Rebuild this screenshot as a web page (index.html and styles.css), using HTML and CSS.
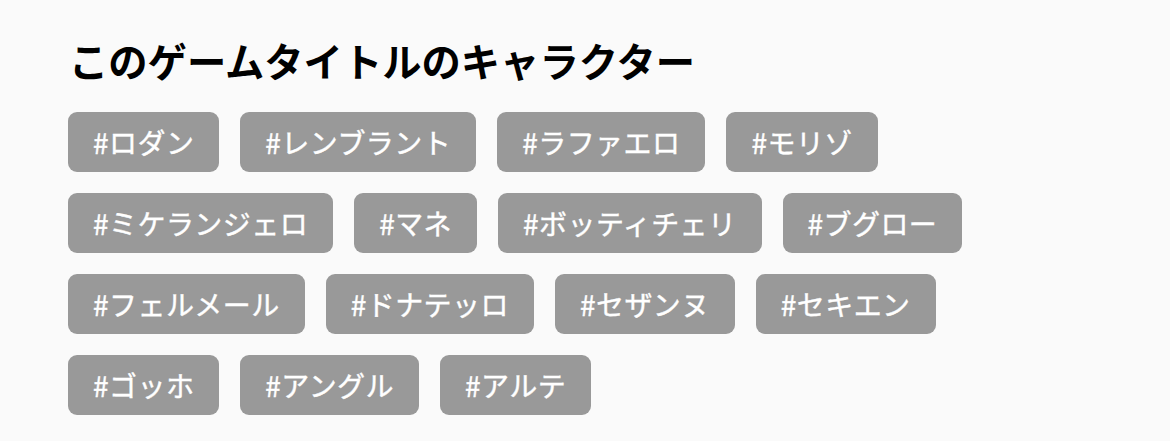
FILE: index.html
```html
<!DOCTYPE html>
<html lang="ja">
<head>
<meta charset="utf-8">
<link rel="stylesheet" href="styles.css">
</head>
<body>
<section class="chars">
  <h2 class="title">このゲームタイトルのキャラクター</h2>
  <ul class="tags">
    <li class="tag">#ロダン</li>
    <li class="tag">#レンブラント</li>
    <li class="tag">#ラファエロ</li>
    <li class="tag">#モリゾ</li>
    <li class="tag">#ミケランジェロ</li>
    <li class="tag">#マネ</li>
    <li class="tag">#ボッティチェリ</li>
    <li class="tag">#ブグロー</li>
    <li class="tag">#フェルメール</li>
    <li class="tag">#ドナテッロ</li>
    <li class="tag">#セザンヌ</li>
    <li class="tag">#セキエン</li>
    <li class="tag">#ゴッホ</li>
    <li class="tag">#アングル</li>
    <li class="tag">#アルテ</li>
  </ul>
</section>
</body>
</html>
```

FILE: styles.css
```css
html, body {
  margin: 0;
  padding: 0;
  background: #fafafa;
}
body {
  font-family: "Noto Sans CJK JP", "Noto Sans", sans-serif;
}
.chars {
  padding: 33px 0 0 68px;
  width: 920px;
}
.title {
  margin: 0 0 0 1px;
  font-size: 39.3px;
  line-height: 53px;
  font-weight: 700;
  color: #000;
}
.tags {
  list-style: none;
  margin: 26px 0 0 0;
  padding: 0;
  display: flex;
  flex-wrap: wrap;
  gap: 21px 21px;
}
.tag {
  background: #999999;
  color: #fff;
  font-size: 28px;
  font-weight: 400;
  letter-spacing: 0.45px;
  -webkit-text-stroke: 0.4px #fff;
  line-height: 60px;
  height: 60px;
  padding: 0 25px;
  border-radius: 9px;
}
```
